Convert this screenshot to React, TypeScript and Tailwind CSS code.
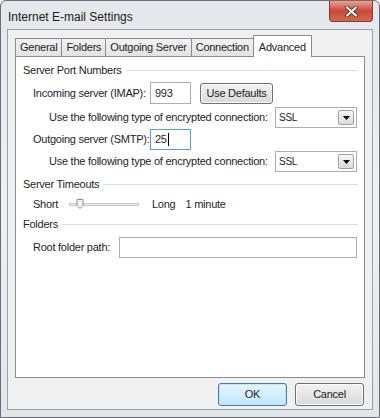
import React from 'react';

const font = { fontFamily: '"Liberation Sans", Arial, sans-serif' };

function Heading({ children }: { children: React.ReactNode }) {
  return (
    <div className="flex h-[16px] items-center gap-[4px]">
      <span className="whitespace-nowrap">{children}</span>
      <div className="h-px flex-1 bg-[#d8dde2]" />
    </div>
  );
}

function TextBox({ value, focused, className }: { value?: string; focused?: boolean; className?: string }) {
  return (
    <div
      className={`flex items-center border bg-white px-[4px] ${
        focused ? 'border-[#569de5]' : 'border-[#abadb3]'
      } ${className ?? ''}`}
    >
      {value}
      {focused && <span className="ml-px h-[13px] w-px bg-black" />}
    </div>
  );
}

function Select() {
  return (
    <div className="flex h-[21px] w-[82px] items-center justify-between border border-[#abadb3] bg-white pl-[3px] pr-[2px]">
      <span className="text-[10px]">SSL</span>
      <div className="flex h-[15px] w-[16px] items-center justify-center rounded-[2px] border border-[#a0a0a0] bg-gradient-to-b from-[#f7f7f7] to-[#dcdcdc]">
        <svg width="7" height="4" viewBox="0 0 7 4">
          <path d="M0 0h7L3.5 4z" fill="#000" />
        </svg>
      </div>
    </div>
  );
}

function Tab({ label, active }: { label: string; active?: boolean }) {
  if (active) {
    return (
      <div className="relative z-10 -mb-px flex h-[22px] items-start whitespace-nowrap border border-b-0 border-[#898c95] bg-white px-[5px] pt-[3px]">
        {label}
      </div>
    );
  }
  return (
    <div className="-mr-px flex h-[18px] items-center whitespace-nowrap border border-b-0 border-[#898c95] bg-gradient-to-b from-[#f2f2f2] to-[#e3e3e3] px-[4px]">
      {label}
    </div>
  );
}

function Button({ label, primary }: { label: string; primary?: boolean }) {
  return (
    <div
      className={`flex h-[23px] w-[69px] items-center justify-center rounded-[3px] border bg-gradient-to-b ${
        primary
          ? 'border-[#3c7fb1] from-[#eaf6fd] to-[#bee6fd] shadow-[inset_0_0_0_1px_#c0e7fd]'
          : 'border-[#707070] from-[#f2f2f2] to-[#d9d9d9] shadow-[inset_0_0_0_1px_#fcfcfc]'
      }`}
    >
      {label}
    </div>
  );
}

export default function App() {
  return (
    <div
      className="flex h-[418px] w-[380px] flex-col rounded-t-[6px] border border-[#6a6e73] bg-gradient-to-b from-[#e4e8ec] via-[#eef1f4] to-[#e2e6ea] text-[11px] tracking-[-0.25px] text-[#1e1e1e]"
      style={font}
    >
      {/* title bar */}
      <div className="flex h-[28px] items-start justify-between">
        <div className="pl-[7px] pt-[7px] text-[12px] tracking-normal text-[#1a1a1a]">Internet E-mail Settings</div>
        <div className="mr-[6px] flex h-[21px] w-[44px] items-center justify-center rounded-b-[4px] border border-t-0 border-[#8b3a30] bg-gradient-to-b from-[#e8a093] via-[#c9483a] to-[#d26a4c]">
          <svg width="13" height="11" viewBox="0 0 13 11">
            <path d="M2 1.5l9 8M11 1.5l-9 8" stroke="#3a1e1a" strokeWidth="3.6" strokeLinecap="round" />
            <path d="M2 1.5l9 8M11 1.5l-9 8" stroke="#fff" strokeWidth="2.2" strokeLinecap="round" />
          </svg>
        </div>
      </div>

      {/* client area */}
      <div className="mx-[6px] mb-[7px] flex flex-1 flex-col border border-[#9aa0a6] bg-[#f0f0f0] px-[7px] pt-[5px]">
        <div className="flex h-[21px] items-end">
          <Tab label="General" />
          <Tab label="Folders" />
          <Tab label="Outgoing Server" />
          <Tab label="Connection" />
          <Tab label="Advanced" active />
        </div>

        <div className="flex h-[322px] flex-col border border-[#898c95] bg-white pl-[7px] pr-[6px] pt-[5px]">
          <Heading>Server Port Numbers</Heading>

          <div className="mt-[4px] flex h-[22px] items-center pl-[10px]">
            <span className="w-[117px] whitespace-nowrap">Incoming server (IMAP):</span>
            <TextBox value="993" className="h-[22px] w-[41px]" />
            <div className="ml-[9px] flex h-[21px] w-[73px] items-center justify-center whitespace-nowrap rounded-[3px] border border-[#707070] bg-gradient-to-b from-[#f2f2f2] to-[#d9d9d9] shadow-[inset_0_0_0_1px_#fcfcfc]">
              Use Defaults
            </div>
          </div>

          <div className="mt-[3px] flex h-[21px] items-center pl-[26px] pr-[1px]">
            <span className="whitespace-nowrap">Use the following type of encrypted connection:</span>
            <div className="ml-auto">
              <Select />
            </div>
          </div>

          <div className="mt-[1px] flex h-[21px] items-center pl-[10px]">
            <span className="w-[117px] whitespace-nowrap">Outgoing server (SMTP):</span>
            <TextBox value="25" focused className="h-[21px] w-[41px]" />
          </div>

          <div className="mt-[1px] flex h-[21px] items-center pl-[26px] pr-[1px]">
            <span className="whitespace-nowrap">Use the following type of encrypted connection:</span>
            <div className="ml-auto">
              <Select />
            </div>
          </div>

          <div className="mt-[4px]">
            <Heading>Server Timeouts</Heading>
          </div>

          <div className="mt-[4px] flex h-[16px] items-center pl-[10px]">
            <span className="w-[36px]">Short</span>
            <div className="relative flex h-[10px] w-[70px] items-center">
              <div className="h-[3px] w-full border border-[#c9c9c9] bg-[#ececec]" />
              <svg className="absolute left-[7px] top-[0px]" width="8" height="10" viewBox="0 0 8 10">
                <path d="M1 0.5h6v6L4 9.5 1 6.5z" fill="#f4f4f4" stroke="#8a8a8a" />
              </svg>
            </div>
            <span className="ml-[13px]">Long</span>
            <span className="ml-[10px] whitespace-nowrap">1 minute</span>
          </div>

          <div className="mt-[4px]">
            <Heading>Folders</Heading>
          </div>

          <div className="mt-[5px] flex h-[21px] items-center pl-[10px] pr-[1px]">
            <span className="w-[86px] whitespace-nowrap">Root folder path:</span>
            <TextBox className="h-[21px] flex-1" />
          </div>
        </div>

        <div className="mt-[5px] flex justify-end gap-[8px] pr-px">
          <Button label="OK" primary />
          <Button label="Cancel" />
        </div>
      </div>
    </div>
  );
}
